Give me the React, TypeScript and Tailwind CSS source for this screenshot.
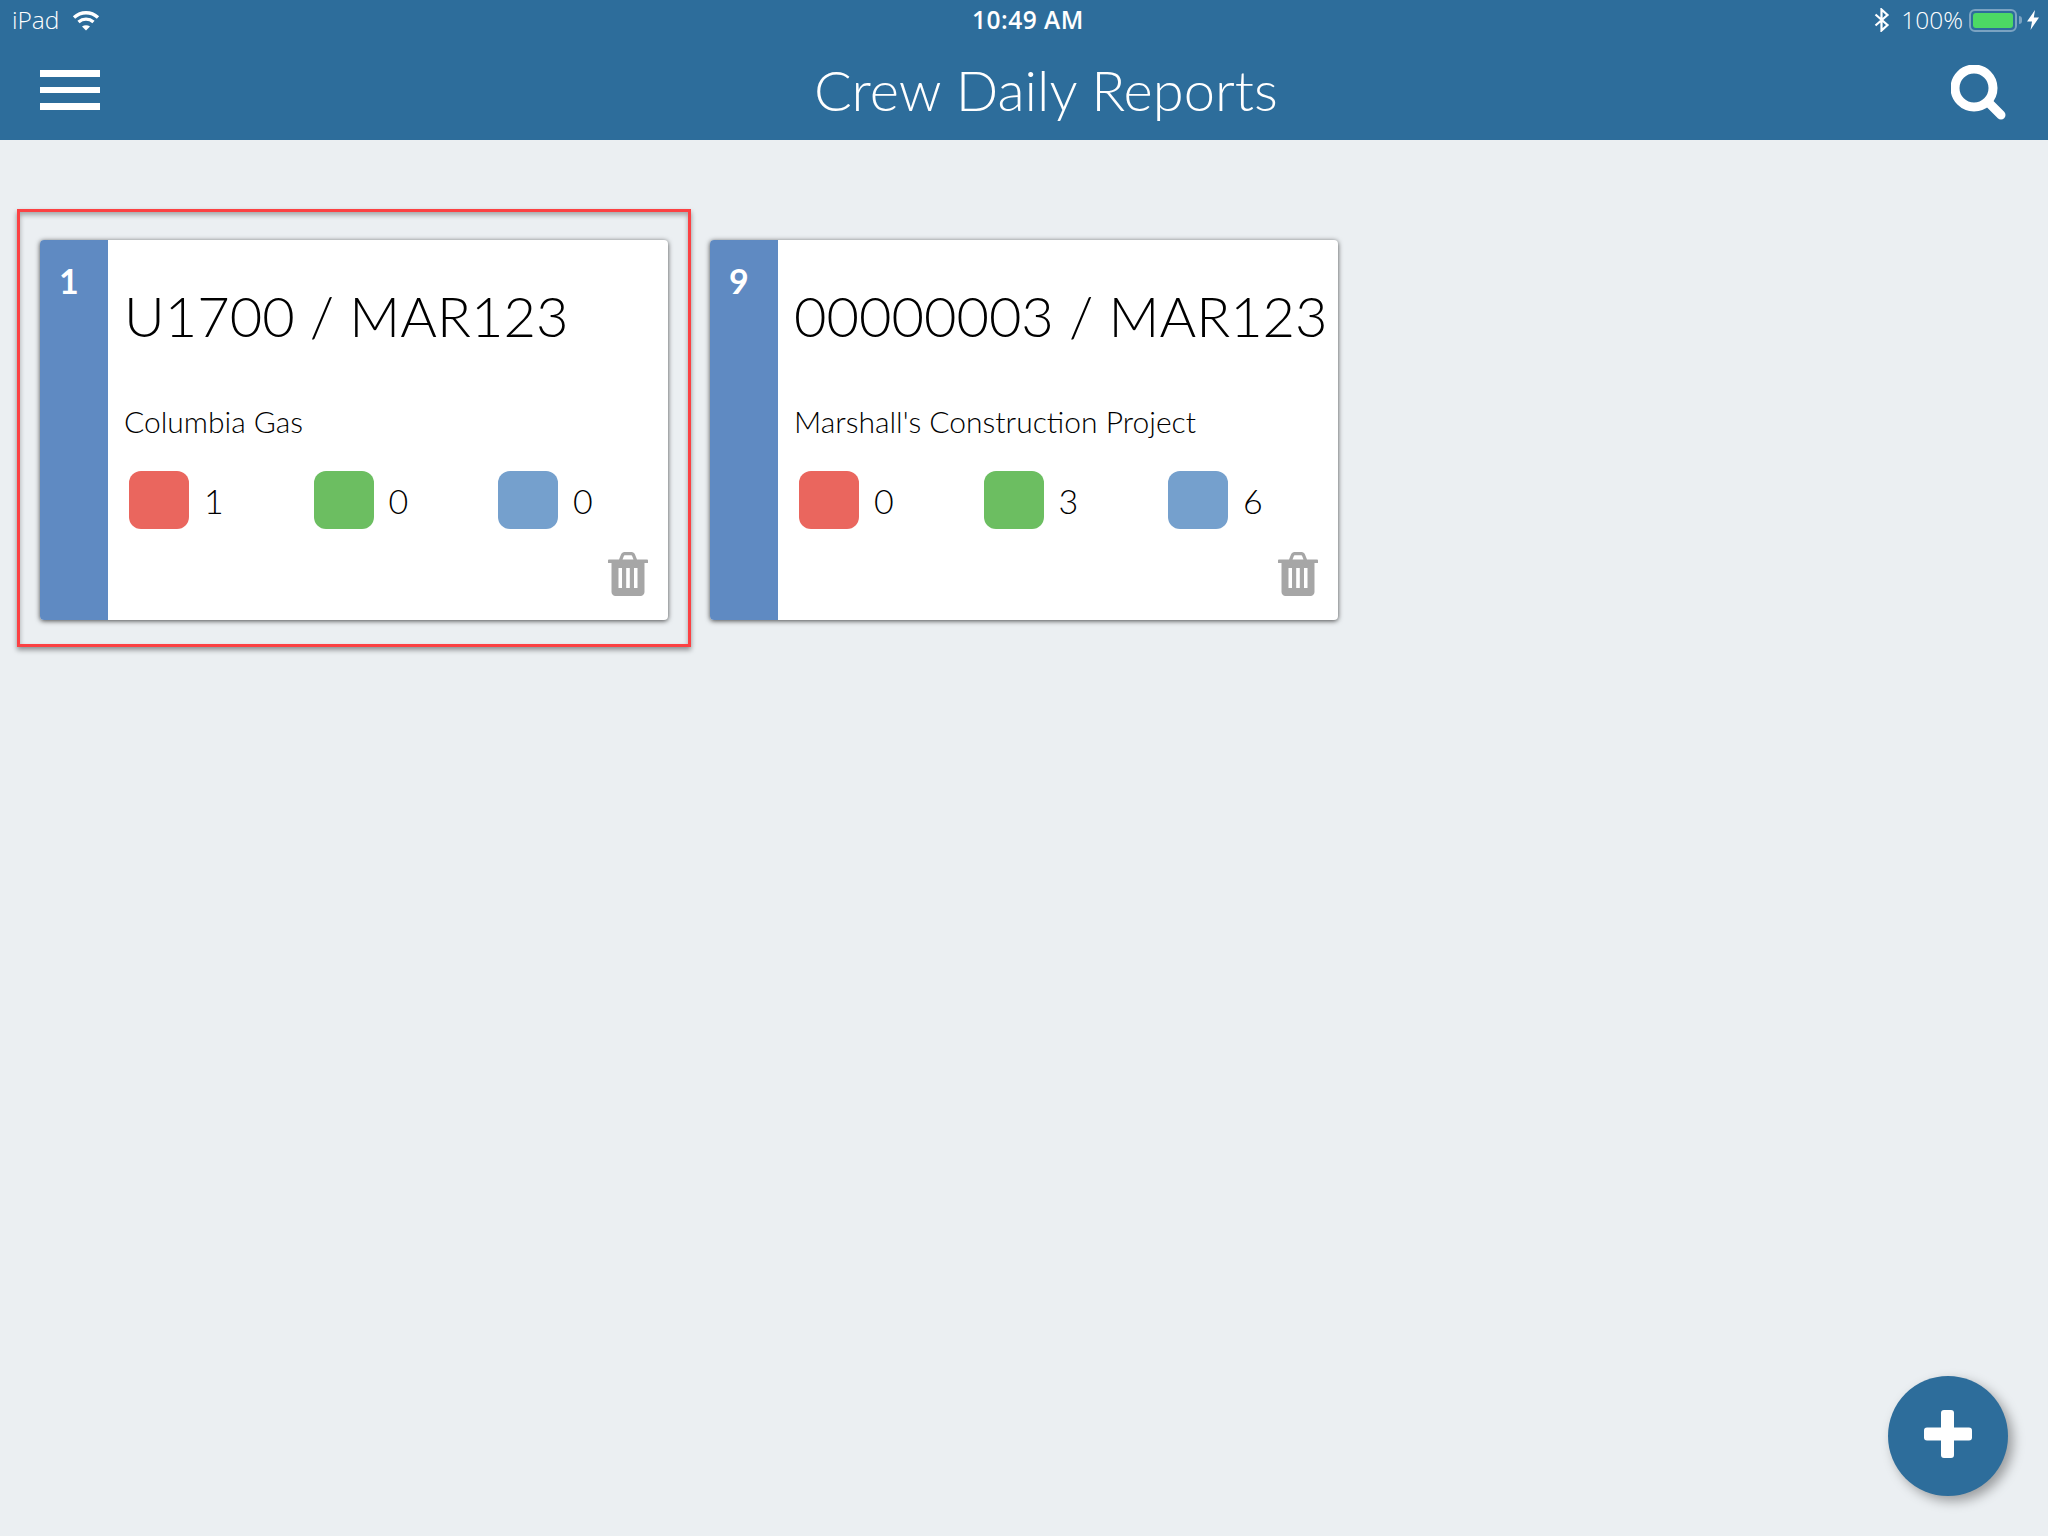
function Wifi() {
  return (
    <svg width="28" height="21" viewBox="0 0 28 21" fill="none" stroke="white" strokeWidth="3.4">
      <path d="M2 7.5C9 1.2 19 1.2 26 7.5" />
      <path d="M6.5 12C11 8.2 17 8.2 21.5 12" />
      <path d="M10 16.5c2.400-1.700 5.600-1.700 8 0L14 20.500z" fill="white" stroke="none" />
    </svg>
  )
}

function Bluetooth() {
  return (
    <svg width="16" height="24" viewBox="0 0 16 24" fill="none" stroke="white" strokeWidth="2.2">
      <path d="M1.500 6.500L13.500 17L7.500 22.500V1.500L13.500 7L1.500 17.500" />
    </svg>
  )
}

function Bolt() {
  return (
    <svg width="12" height="20" viewBox="0 0 12 20" fill="white">
      <path d="M8 0L0 11.500H5L3.500 20L12 7.500H6.800z" />
    </svg>
  )
}

function Search() {
  return (
    <svg width="56" height="56" viewBox="0 0 56 56" fill="none" stroke="white">
      <circle cx="23" cy="23" r="19" strokeWidth="9" />
      <path d="M37 37L50 50" strokeWidth="9" strokeLinecap="round" />
    </svg>
  )
}

function Trash() {
  return (
    <svg width="40" height="44" viewBox="0 0 40 44" fill="#a6a6a6">
      <path d="M0 8.500C0 8 .5 7.500 1 7.500H11L13 2.500C13.500 1 15 0 16.500 0H23.500C25 0 26.500 1 27 2.500L29 7.500H39C39.500 7.500 40 8 40 8.500V11H0zM14.500 7.500H25.500L24 3.700C23.900 3.400 23.600 3.200 23.300 3.200H16.700C16.400 3.200 16.100 3.400 16 3.700z" />
      <path fillRule="evenodd" d="M3.500 11H36.500V40C36.500 42.200 34.700 44 32.500 44H7.500C5.300 44 3.500 42.200 3.500 40zM10.500 16V36H14V16zM18.200 16V36H21.800V16zM26 16V36H29.500V16z" />
    </svg>
  )
}

function Stat({ color, value }: { color: string; value: string }) {
  return (
    <div className="flex items-center w-[184.500px] shrink-0">
      <div className={`w-[60px] h-[58px] rounded-xl ${color}`}></div>
      <span className="ml-[15px] text-[34px] font-light text-black">{value}</span>
    </div>
  )
}

type CardProps = {
  num: string
  title: string
  sub: string
  red: string
  green: string
  blue: string
}

function Card({ num, title, sub, red, green, blue }: CardProps) {
  return (
    <div className="flex w-[628px] h-[380px] bg-white rounded-[4px] overflow-hidden shadow-[0_1px_5px_rgba(0,0,0,0.7)]">
      <div className="w-[68px] shrink-0 bg-[#5f8ac2] text-white text-[34px] font-bold pt-[21px] pl-[19px] leading-[40px]">
        {num}
      </div>
      <div className="flex-1 min-w-0 pl-[16px]">
        <div className="text-[56px] leading-[70px] font-light text-black whitespace-nowrap mt-[41px]">{title}</div>
        <div className="text-[30px] leading-[36px] font-light text-black whitespace-nowrap mt-[52px]">{sub}</div>
        <div className="flex mt-[32px] pl-[5px]">
          <Stat color="bg-[#ea665e]" value={red} />
          <Stat color="bg-[#6cbe61]" value={green} />
          <Stat color="bg-[#75a0cd]" value={blue} />
        </div>
        <div className="flex justify-end mt-[23px] pr-[20px]">
          <Trash />
        </div>
      </div>
    </div>
  )
}

export default function App() {
  return (
    <div className="relative w-[2048px] h-[1536px] bg-[#ebeff2] overflow-hidden font-['Lato',sans-serif]">
      <header className="bg-[#2d6d9b] h-[140px] text-white">
        <div className="relative flex items-center justify-between h-[40px] pl-3 pr-[9px] font-['Open_Sans',sans-serif] text-[24.500px] font-light">
          <div className="flex items-center gap-[13px]">
            <span>iPad</span>
            <Wifi />
          </div>
          <span className="absolute left-[972px] top-[3px] text-[24.500px] font-semibold leading-[34px] tracking-[0.5px]">10:49 AM</span>
          <div className="flex items-center">
            <Bluetooth />
            <span className="ml-[11px]">100%</span>
            <div className="ml-[6px] w-[48px] h-[23px] border-2 border-[#7ba3c2] rounded-[6px] p-[2px]">
              <div className="w-full h-full bg-[#4cd964] rounded-[3px]"></div>
            </div>
            <div className="ml-[2px] w-[3px] h-[8px] bg-[#7ba3c2] rounded-r-sm"></div>
            <div className="ml-[5px]"><Bolt /></div>
          </div>
        </div>
        <div className="relative flex items-center justify-between h-[100px] pl-10 pr-[41px]">
          <div className="flex flex-col gap-[10px]">
            <div className="w-[60px] h-[7px] bg-white"></div>
            <div className="w-[60px] h-[6px] bg-white"></div>
            <div className="w-[60px] h-[7px] bg-white"></div>
          </div>
          <h1 className="text-[56px] font-light leading-[70px] absolute left-[814px] top-[15px]">Crew Daily Reports</h1>
          <div className="mt-[6px]"><Search /></div>
        </div>
      </header>

      <main className="flex gap-[42px] pl-10 pt-[100px]">
        <div className="relative">
          <Card num="1" title="U1700 / MAR123" sub="Columbia Gas" red="1" green="0" blue="0" />
          <div className="absolute left-[-23px] top-[-31px] w-[674px] h-[438px] border-[3px] border-[#fb4143] shadow-[0_3px_5px_rgba(0,0,0,0.4),inset_0_3px_5px_rgba(0,0,0,0.3)]"></div>
        </div>
        <Card num="9" title="00000003 / MAR123" sub="Marshall's Construction Project" red="0" green="3" blue="6" />
      </main>

      <button className="absolute left-[1888px] top-[1376px] w-[120px] h-[120px] rounded-full bg-[#2d6d9b] flex items-center justify-center shadow-[5px_5px_12px_rgba(0,0,0,0.35)]">
        <svg className="mb-[5px]" width="48" height="48" viewBox="0 0 48 48" fill="white">
          <rect x="17" y="0" width="13" height="48" rx="3" />
          <rect x="0" y="17.500" width="48" height="13" rx="3" />
        </svg>
      </button>
    </div>
  )
}
